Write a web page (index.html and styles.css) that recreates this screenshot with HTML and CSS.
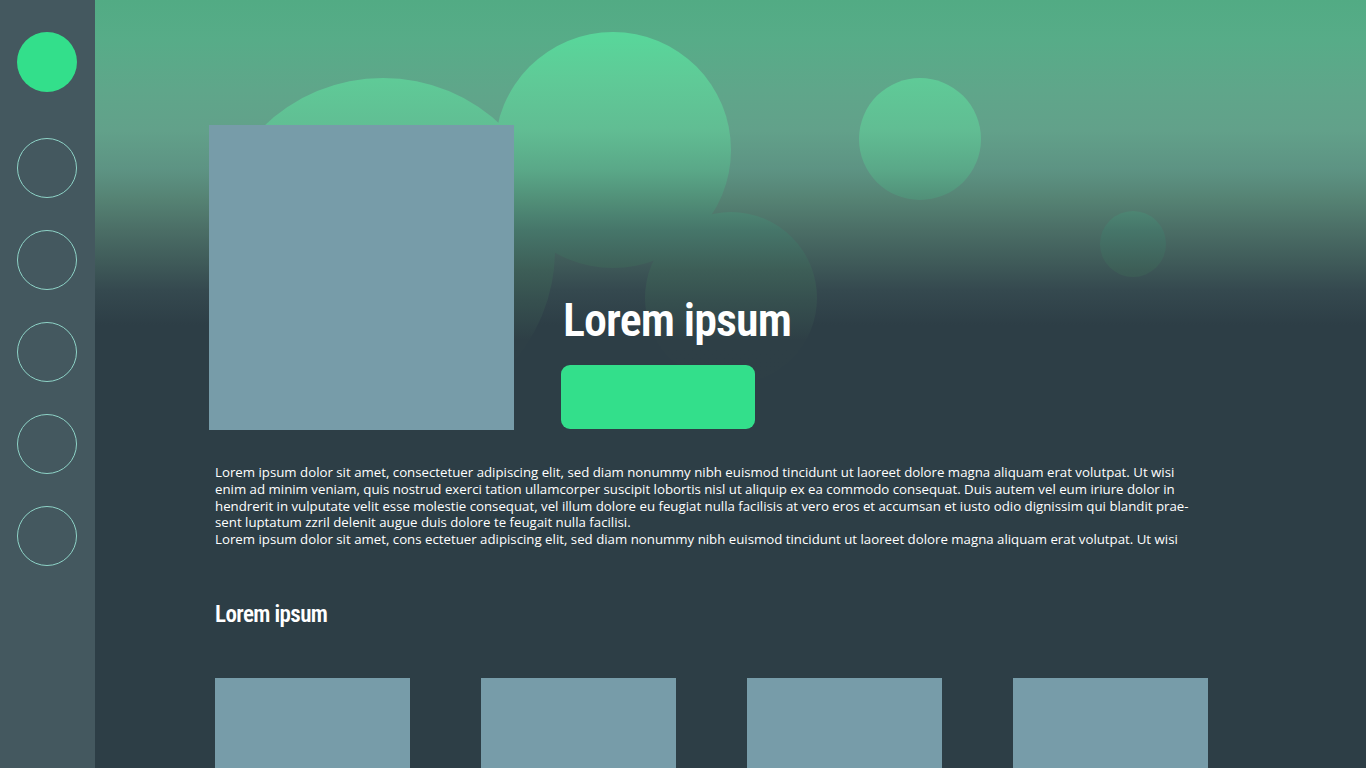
FILE: index.html
```html
<!DOCTYPE html>
<html lang="en">
<head>
<meta charset="utf-8">
<title>Lorem ipsum</title>
<link rel="stylesheet" href="styles.css">
</head>
<body>
<div class="app">
  <nav class="sidebar">
    <span class="dot dot-active"></span>
    <span class="dot"></span>
    <span class="dot"></span>
    <span class="dot"></span>
    <span class="dot"></span>
    <span class="dot"></span>
  </nav>
  <main class="main">
    <div class="decor" aria-hidden="true">
      <span class="bubble bubble-1"></span>
      <span class="bubble bubble-2"></span>
      <span class="bubble bubble-3"></span>
      <span class="bubble bubble-4"></span>
      <span class="bubble bubble-5"></span>
    </div>
    <section class="hero">
      <div class="hero-img"></div>
      <div class="hero-text">
        <h1 class="hero-title">Lorem ipsum</h1>
        <div class="hero-btn"></div>
      </div>
    </section>
    <div class="copy">
      <p><span class="ln">Lorem ipsum dolor sit amet, consectetuer adipiscing elit, sed diam nonummy nibh euismod tincidunt ut laoreet dolore magna aliquam erat volutpat. Ut wisi</span><br><span class="ln">enim ad minim veniam, quis nostrud exerci tation ullamcorper suscipit lobortis nisl ut aliquip ex ea commodo consequat. Duis autem vel eum iriure dolor in</span><br><span class="ln">hendrerit in vulputate velit esse molestie consequat, vel illum dolore eu feugiat nulla facilisis at vero eros et accumsan et iusto odio dignissim qui blandit prae-</span><br><span class="ln">sent luptatum zzril delenit augue duis dolore te feugait nulla facilisi.</span></p>
      <p><span class="ln">Lorem ipsum dolor sit amet, cons ectetuer adipiscing elit, sed diam nonummy nibh euismod tincidunt ut laoreet dolore magna aliquam erat volutpat. Ut wisi</span></p>
    </div>
    <h2 class="section-title">Lorem ipsum</h2>
    <div class="cards">
      <div class="card"></div>
      <div class="card"></div>
      <div class="card"></div>
      <div class="card"></div>
    </div>
  </main>
</div>
</body>
</html>
```

FILE: styles.css
```css
html, body {
  margin: 0;
  padding: 0;
  height: 100%;
  overflow: hidden;
  background: #2d3e46;
}

.app {
  display: flex;
  height: 768px;
  overflow: hidden;
}

.sidebar {
  flex: none;
  width: 95px;
  background: #44585f;
  display: flex;
  flex-direction: column;
  align-items: center;
  padding-top: 32px;
  gap: 32px;
}

.dot {
  display: block;
  width: 60px;
  height: 60px;
  box-sizing: border-box;
  border-radius: 50%;
  border: 1.5px solid #8ed3c7;
  margin-left: -1px;
}

.dot-active {
  background: #33df8b;
  border: none;
  margin-bottom: 14px;
}

.main {
  flex: 1;
  position: relative;
  background-color: #2d3e46;
  background-image: linear-gradient(to bottom,
    #52ab84 0px, #57ac88 40px, #5fa68a 90px, #62a18a 130px,
    #5d9383 170px, #558273 200px, #4b6e66 230px, #405c5a 260px,
    #35494f 290px, #2d3e46 325px);
  background-repeat: no-repeat;
  background-size: 100% 330px;
  font-family: "Open Sans", "Noto Sans", sans-serif;
  color: #fff;
}

.decor {
  position: absolute;
  inset: 0;
  z-index: 0;
}

.bubble {
  position: absolute;
  border-radius: 50%;
  background-image: linear-gradient(to bottom,
    #55dc9b 0px, #59d59a 40px, #5fca97 80px, #61bd93 130px,
    #5aa888 170px, #518f78 200px, #46766a 230px, #3d5e57 270px,
    #36504f 300px, #2e3f46 340px, #2d3e46 768px);
  background-attachment: fixed;
}

.bubble-1 { left: 116px; top: 78px; width: 344px; height: 344px; }
.bubble-2 { left: 400px; top: 32px; width: 236px; height: 236px; }
.bubble-3 { left: 550px; top: 212px; width: 172px; height: 172px; }
.bubble-4 { left: 764px; top: 78px; width: 122px; height: 122px; }
.bubble-5 { left: 1005px; top: 211px; width: 66px; height: 66px; }

.hero {
  position: relative;
  z-index: 1;
  display: flex;
  align-items: flex-end;
  gap: 47px;
  padding: 125px 0 0 114px;
}

.hero-img {
  flex: none;
  width: 305px;
  height: 305px;
  background: #779ca9;
}

.hero-text {
  display: flex;
  flex-direction: column;
  align-items: flex-start;
  padding-bottom: 1px;
}

.hero-title,
.section-title {
  font-family: "Roboto Condensed", "Liberation Sans Narrow", "DejaVu Sans Condensed", Roboto, sans-serif;
  font-stretch: condensed;
  font-weight: 600;
  margin: 0;
  line-height: 1;
  color: #fff;
}

.hero-title {
  font-size: 46px;
  letter-spacing: -0.9px;
  margin-left: 2px;
  margin-bottom: 22px;
}

.hero-btn {
  width: 194px;
  height: 64px;
  border-radius: 9px;
  background: #33df8b;
}

.copy {
  position: relative;
  z-index: 1;
  margin-top: 34px;
  padding-left: 120px;
  font-size: 13.25px;
  line-height: 16.8px;
}

.copy p {
  margin: 0;
}

.ln {
  white-space: nowrap;
}

.section-title {
  font-size: 23px;
  letter-spacing: -0.6px;
  margin: 55px 0 0 120px;
}

.cards {
  display: flex;
  gap: 71px;
  margin: 52px 0 0 120px;
}

.card {
  flex: none;
  width: 195px;
  height: 160px;
  background: #779ca9;
}
```
